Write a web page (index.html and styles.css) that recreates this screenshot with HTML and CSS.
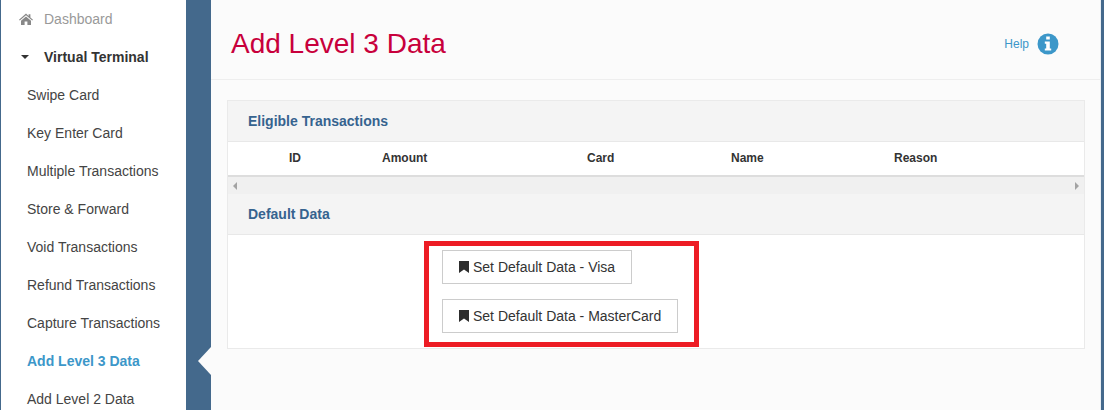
FILE: index.html
```html
<!DOCTYPE html>
<html lang="en">
<head>
    <meta charset="UTF-8">
    <title>Add Level 3 Data</title>
    <link rel="stylesheet" href="styles.css">
</head>
<body>
    <div class="layout">
        <nav class="sidebar">
            <a class="nav-top nav-muted">
                <svg class="nav-icon" width="14" height="12" viewBox="0 0 14 12"><path fill="#888" d="M7 0.6 L9.6 2.9 V1.2 H11.4 V4.5 L14 6.8 L13.2 7.6 L7 2.2 L0.8 7.6 L0 6.8 Z M7 3.4 L12 7.7 V12 H8.4 V8.6 H5.6 V12 H2 V7.7 Z"/></svg>
                Dashboard
            </a>
            <a class="nav-top nav-open">
                <span class="caret"></span>
                Virtual Terminal
            </a>
            <a class="nav-sub">Swipe Card</a>
            <a class="nav-sub">Key Enter Card</a>
            <a class="nav-sub">Multiple Transactions</a>
            <a class="nav-sub">Store &amp; Forward</a>
            <a class="nav-sub">Void Transactions</a>
            <a class="nav-sub">Refund Transactions</a>
            <a class="nav-sub">Capture Transactions</a>
            <a class="nav-sub nav-active">Add Level 3 Data</a>
            <a class="nav-sub">Add Level 2 Data</a>
        </nav>

        <div class="divider"><span class="notch"></span></div>

        <main class="content">
            <header class="page-head">
                <h1>Add Level 3 Data</h1>
                <a class="help">
                    Help
                    <svg width="22" height="22" viewBox="0 0 22 22"><circle cx="11" cy="11" r="10.5" fill="#3c97c9"/><path fill="#fff" d="M9.2 3.6 H12.8 V6.6 H9.2 Z M7.8 8.6 H12.8 V15.4 H14.2 V17.6 H7.8 V15.4 H9.2 V10.8 H7.8 Z"/></svg>
                </a>
            </header>

            <section class="panel">
                <h2 class="panel-title">Eligible Transactions</h2>
                <div class="table-head">
                    <span>ID</span>
                    <span>Amount</span>
                    <span>Card</span>
                    <span>Name</span>
                    <span>Reason</span>
                </div>
                <div class="scrollbar">
                    <span class="arrow arrow-left"></span>
                    <span class="arrow arrow-right"></span>
                </div>
                <h2 class="panel-title">Default Data</h2>
                <div class="panel-body">
                    <button class="btn">
                        <svg width="10" height="12" viewBox="0 0 10 12"><path fill="#2d2d2d" d="M0 0 H10 V12 L5 8.4 L0 12 Z"/></svg>
                        Set Default Data - Visa
                    </button>
                    <button class="btn">
                        <svg width="10" height="12" viewBox="0 0 10 12"><path fill="#2d2d2d" d="M0 0 H10 V12 L5 8.4 L0 12 Z"/></svg>
                        Set Default Data - MasterCard
                    </button>
                    <div class="highlight"></div>
                </div>
            </section>
        </main>
    </div>
</body>
</html>
```

FILE: styles.css
```css
html, body {
    margin: 0;
    padding: 0;
    height: 410px;
    overflow: hidden;
}

body {
    font-family: "Liberation Sans", Arial, sans-serif;
    font-size: 14px;
    color: #333;
    background: #fff;
}

.layout {
    display: flex;
    height: 410px;
    border-left: 1px solid #44698c;
    border-right: 3px solid #44698c;
}

.sidebar {
    width: 185px;
    flex-shrink: 0;
    background: #fff;
}

.sidebar a {
    display: flex;
    align-items: center;
    height: 38px;
}

.nav-top {
    padding-left: 18px;
}

.nav-icon {
    width: 14px;
    margin-right: 11px;
}

.nav-muted {
    color: #999;
}

.nav-open {
    font-weight: bold;
    color: #333;
}

.caret {
    width: 0;
    height: 0;
    margin: 0 15px 0 2px;
    border-top: 4px solid #333;
    border-left: 4px solid transparent;
    border-right: 4px solid transparent;
}

.nav-sub {
    padding-left: 26px;
    color: #444;
}

.nav-active {
    font-weight: bold;
    color: #3c97c9;
}

.divider {
    width: 25px;
    flex-shrink: 0;
    background: #44698c;
    position: relative;
}

.notch {
    position: absolute;
    right: 0;
    top: 347px;
    width: 0;
    height: 0;
    border-top: 14px solid transparent;
    border-bottom: 14px solid transparent;
    border-right: 13px solid #fbfbfb;
}

.content {
    flex: 1;
    background: #fbfbfb;
    border-right: 1px solid #e8eef3;
}

.page-head {
    display: flex;
    align-items: center;
    justify-content: space-between;
    height: 71px;
    padding: 8px 41px 0 20px;
    border-bottom: 1px solid #eee;
}

h1 {
    margin: 0;
    font-size: 28px;
    font-weight: normal;
    color: #c8003c;
}

.help {
    display: flex;
    align-items: center;
    gap: 8px;
    font-size: 12px;
    color: #3c97c9;
}

.panel {
    margin: 20px 15px 0 16px;
    border: 1px solid #eaeaea;
    background: #fff;
}

.panel-title {
    display: flex;
    align-items: center;
    height: 39px;
    margin: 0;
    padding: 0 0 1px 20px;
    font-size: 14px;
    color: #36638f;
    background: #f4f4f4;
    border-bottom: 1px solid #e8e8e8;
}

.table-head {
    display: grid;
    grid-template-columns: 93px 205px 144px 163px 1fr;
    align-items: center;
    height: 31px;
    padding: 0 0 2px 61px;
    font-size: 12px;
    font-weight: bold;
    border-bottom: 2px solid #ddd;
}

.scrollbar {
    display: flex;
    align-items: center;
    justify-content: space-between;
    height: 17px;
    padding: 0 5px;
    background: #f0f0f0;
}

.arrow {
    width: 0;
    height: 0;
    border-top: 4px solid transparent;
    border-bottom: 4px solid transparent;
}

.arrow-left {
    border-right: 4px solid #a3a3a3;
}

.arrow-right {
    border-left: 4px solid #a3a3a3;
}

.panel-body {
    position: relative;
    display: flex;
    flex-direction: column;
    align-items: flex-start;
    gap: 15px;
    padding: 15px 0 15px 214px;
}

.btn {
    display: flex;
    align-items: center;
    gap: 4px;
    height: 34px;
    padding: 0 16px;
    font-family: inherit;
    font-size: 14px;
    color: #333;
    background: #fff;
    border: 1px solid #ccc;
}

.highlight {
    position: absolute;
    left: 196px;
    top: 6px;
    width: 265px;
    height: 96px;
    border: 5px solid #ed1c24;
}
```
